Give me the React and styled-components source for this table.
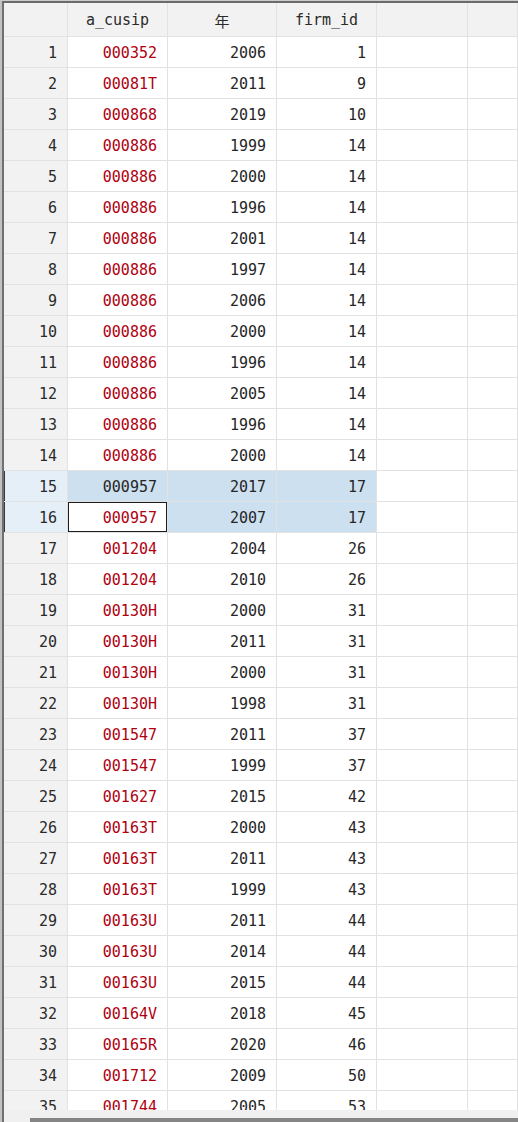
import React from "react";
import styled, { createGlobalStyle, css } from "styled-components";

const GlobalStyle = createGlobalStyle`
  html, body { margin: 0; padding: 0; background: #ffffff; }
  body { overflow: hidden; }
`;

const rows = [
  ["000352", 2006, 1],
  ["00081T", 2011, 9],
  ["000868", 2019, 10],
  ["000886", 1999, 14],
  ["000886", 2000, 14],
  ["000886", 1996, 14],
  ["000886", 2001, 14],
  ["000886", 1997, 14],
  ["000886", 2006, 14],
  ["000886", 2000, 14],
  ["000886", 1996, 14],
  ["000886", 2005, 14],
  ["000886", 1996, 14],
  ["000886", 2000, 14],
  ["000957", 2017, 17],
  ["000957", 2007, 17],
  ["001204", 2004, 26],
  ["001204", 2010, 26],
  ["00130H", 2000, 31],
  ["00130H", 2011, 31],
  ["00130H", 2000, 31],
  ["00130H", 1998, 31],
  ["001547", 2011, 37],
  ["001547", 1999, 37],
  ["001627", 2015, 42],
  ["00163T", 2000, 43],
  ["00163T", 2011, 43],
  ["00163T", 1999, 43],
  ["00163U", 2011, 44],
  ["00163U", 2014, 44],
  ["00163U", 2015, 44],
  ["00164V", 2018, 45],
  ["00165R", 2020, 46],
  ["001712", 2009, 50],
  ["001744", 2005, 53],
];

const SELECTED = new Set([15, 16]);
const CURRENT = 16;

const Window = styled.div`
  width: 518px;
  height: 1122px;
  display: flex;
  flex-direction: column;
  box-sizing: border-box;
  border-top: 1px solid #cbcbcb;
  border-left: 2px solid #c2c2c2;
  background: #ffffff;
  overflow: hidden;
  font-family: "DejaVu Sans Mono", "Noto Sans CJK SC", monospace;
  font-size: 15px;
  color: #262626;
`;

const Frame = styled.div`
  flex: 1;
  min-height: 0;
  display: flex;
  flex-direction: column;
  border-top: 2px solid #6b6b6b;
  border-left: 2px solid #707070;
  overflow: hidden;
`;

const Grid = styled.div`
  flex: 1;
  min-height: 0;
  overflow: hidden;
  display: flex;
  flex-direction: column;
`;

const Row = styled.div`
  display: grid;
  grid-template-columns: 64px 100px 109px 100px 91px 1fr;
  height: ${(p) => (p.$header ? 34 : 31)}px;
  flex-shrink: 0;
`;

const Cell = styled.div`
  box-sizing: border-box;
  display: flex;
  align-items: center;
  justify-content: ${(p) => (p.$center ? "center" : "flex-end")};
  padding-right: ${(p) => (p.$center ? 0 : 10)}px;
  padding-top: 1px;
  border-right: 1px solid #e2e2e2;
  border-bottom: 1px solid #e2e2e2;
  white-space: nowrap;
  background: ${(p) => (p.$selected ? "#cde0f0" : "#ffffff")};
  color: ${(p) => (p.$str && !p.$selected ? "#b00010" : "#262626")};
  ${(p) =>
    p.$current &&
    css`
      background: #ffffff;
      color: #b00010;
      box-shadow: inset 0 0 0 1px #1c1c1c;
    `}
`;

const HeadCell = styled(Cell)`
  background: #f2f2f2;
  color: #2a2a2a;
`;

const RowNum = styled(Cell)`
  background: ${(p) => (p.$selected ? "#e5eff8" : "#f2f2f2")};
  color: #2a2a2a;
  box-shadow: ${(p) => (p.$selected ? "inset 1px 0 0 #3a3a3a" : "none")};
`;

const ScrollTrack = styled.div`
  height: 12px;
  flex-shrink: 0;
  background: #f0f0f0;
  display: flex;
  align-items: flex-end;
  padding-left: 26px;
`;

const ScrollThumb = styled.div`
  flex: 1;
  height: 4px;
  background: #858585;
`;

export default function App() {
  return (
    <>
      <GlobalStyle />
      <Window>
        <Frame>
          <Grid>
            <Row $header>
              <HeadCell $center />
              <HeadCell $center>a_cusip</HeadCell>
              <HeadCell $center>年</HeadCell>
              <HeadCell $center>firm_id</HeadCell>
              <HeadCell $center />
              <HeadCell $center />
            </Row>
            {rows.map(([cusip, year, id], i) => {
              const n = i + 1;
              const sel = SELECTED.has(n);
              const cur = n === CURRENT;
              return (
                <Row key={n}>
                  <RowNum $selected={sel}>{n}</RowNum>
                  <Cell $str $selected={sel} $current={cur}>
                    {cusip}
                  </Cell>
                  <Cell $selected={sel}>{year}</Cell>
                  <Cell $selected={sel}>{id}</Cell>
                  <Cell />
                  <Cell />
                </Row>
              );
            })}
          </Grid>
          <ScrollTrack>
            <ScrollThumb />
          </ScrollTrack>
        </Frame>
      </Window>
    </>
  );
}
